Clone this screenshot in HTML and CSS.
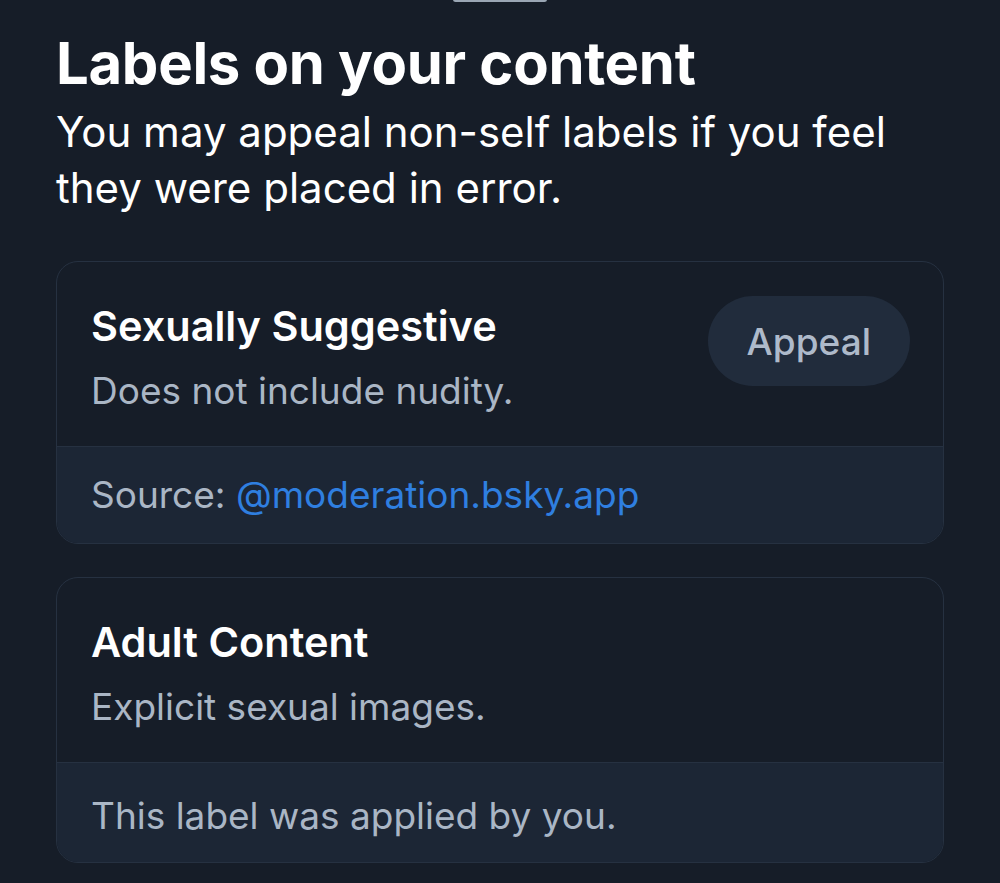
FILE: index.html
```html
<!DOCTYPE html>
<html lang="en">
<head>
<meta charset="utf-8">
<title>Labels on your content</title>
<link rel="stylesheet" href="styles.css">
</head>
<body>
<div class="sheet">
  <div class="handle"></div>
  <h1 class="title">Labels on your content</h1>
  <p class="subtitle">You may appeal non-self labels if you feel they were placed in error.</p>
  <div class="cards">
    <div class="card">
      <div class="card-main">
        <div class="card-text">
          <div class="card-title">Sexually Suggestive</div>
          <div class="card-desc">Does not include nudity.</div>
        </div>
        <button class="appeal">Appeal</button>
      </div>
      <div class="card-foot">Source: <span class="link">@moderation.bsky.app</span></div>
    </div>
    <div class="card">
      <div class="card-main">
        <div class="card-text">
          <div class="card-title">Adult Content</div>
          <div class="card-desc">Explicit sexual images.</div>
        </div>
      </div>
      <div class="card-foot card-foot-tall">This label was applied by you.</div>
    </div>
  </div>
</div>
</body>
</html>
```
FILE: styles.css
```css
html, body {
  margin: 0;
  padding: 0;
  background: #161d28;
  height: 100%;
  overflow: hidden;
}
body {
  font-family: Inter, "Noto Sans", sans-serif;
  color: #ffffff;
}
.sheet {
  position: relative;
  padding: 0 56px;
}
.handle {
  position: absolute;
  top: -3px;
  left: 453px;
  width: 94px;
  height: 5px;
  border-radius: 3px;
  background: #9aa6b4;
}
.title {
  margin: 0;
  padding-top: 28px;
  font-size: 58px;
  line-height: 70px;
  font-weight: 700;
  letter-spacing: -0.3px;
}
.subtitle {
  margin: 0;
  font-size: 42px;
  line-height: 56px;
  color: #ffffff;
  padding-top: 6px;
}
.cards {
  display: flex;
  flex-direction: column;
  gap: 33px;
  margin-top: 45px;
}
.card {
  border: 1px solid #263141;
  border-radius: 22px;
  overflow: hidden;
}
.card-main {
  display: flex;
  align-items: flex-start;
  justify-content: space-between;
  padding: 33px 33px 25px 34px;
  min-height: 121px;
}
.card-title {
  font-size: 41.5px;
  line-height: 62px;
  font-weight: 600;
  color: #ffffff;
}
.card-desc {
  font-size: 37px;
  line-height: 60px;
  padding-top: 4px;
  color: #aab6c5;
}
.appeal {
  font-family: inherit;
  border: none;
  background: #212c3c;
  color: #aebaca;
  font-size: 37px;
  font-weight: 500;
  height: 90px;
  padding: 0 39px;
  border-radius: 45px;
  margin-top: 1px;
}
.card-foot {
  background: #1c2635;
  border-top: 1px solid #263141;
  padding: 22px 34px 22px;
  font-size: 37px;
  line-height: 52px;
  color: #aab6c5;
}
.card-foot-tall {
  padding-top: 27px;
  padding-bottom: 20px;
}
.link {
  color: #2f7fe0;
}
```
